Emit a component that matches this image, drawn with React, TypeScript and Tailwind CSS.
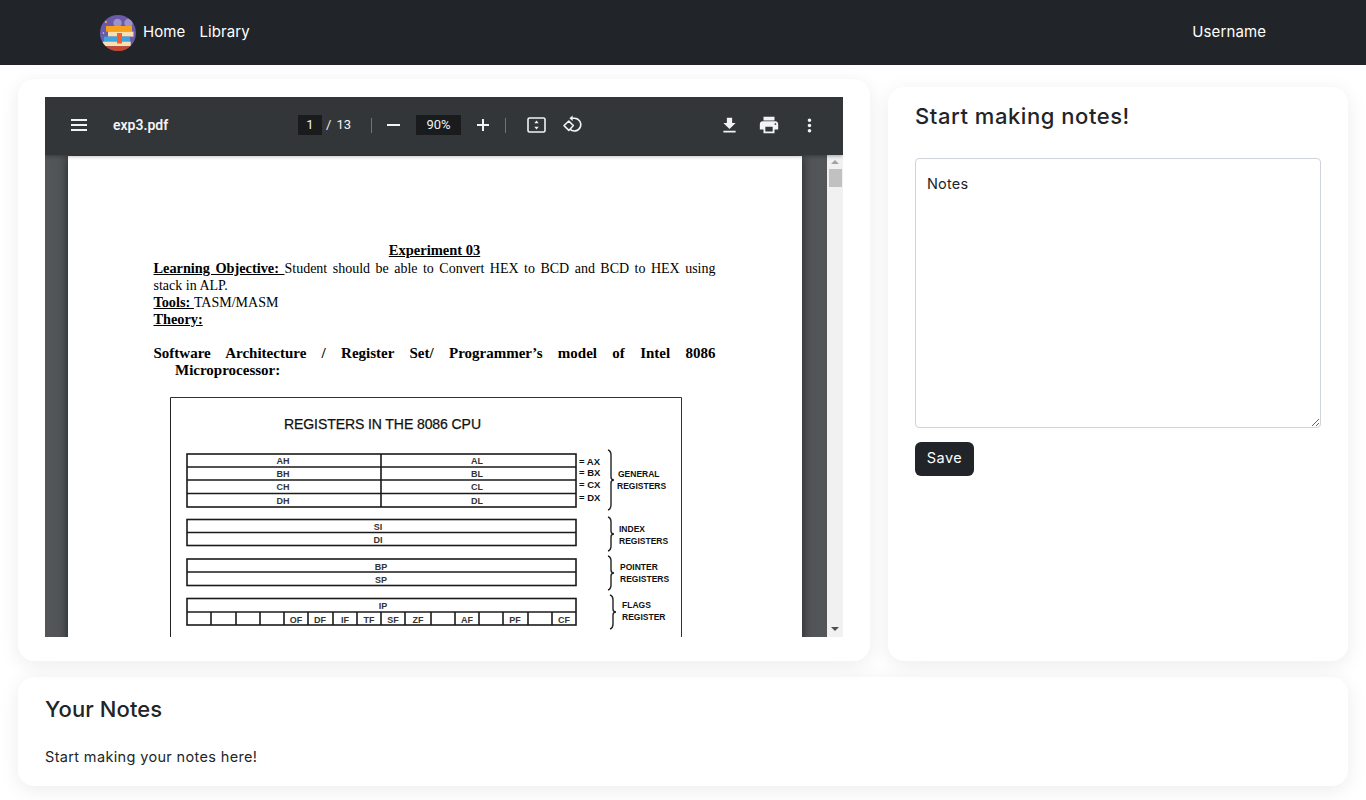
const Logo = () => (
  <svg width="36" height="36" viewBox="0 0 36 36" className="shrink-0">
    <defs>
      <clipPath id="logoClip"><circle cx="18" cy="18" r="18" /></clipPath>
    </defs>
    <g clipPath="url(#logoClip)">
      <rect width="36" height="36" fill="#6a5aa8" />
      <circle cx="17.5" cy="8" r="4.2" fill="#9c93c9" />
      <circle cx="28.5" cy="8" r="4.2" fill="#9c93c9" />
      <circle cx="6" cy="7" r="1" fill="#f6b84a" />
      <circle cx="3.5" cy="18" r="0.8" fill="#d9d4f0" />
      <rect x="6" y="11" width="26" height="5.6" fill="#f7a11b" />
      <rect x="8" y="16.6" width="25.5" height="5" fill="#f8deb0" />
      <rect x="4" y="21.6" width="26" height="5" fill="#3aa5e0" />
      <rect x="2.7" y="26.6" width="28" height="4.6" fill="#f8deb0" />
      <rect x="0" y="31.2" width="36" height="5" fill="#c9472b" />
      <rect x="17" y="18" width="5" height="10.5" fill="#f0602a" />
    </g>
  </svg>
);

const Tool = ({ d, size = 21 }: { d: string; size?: number }) => (
  <svg width={size} height={size} viewBox="0 0 24 24" fill="#f1f3f4" className="shrink-0">
    <path d={d} />
  </svg>
);

const Sep = () => <div className="w-px h-[15px] bg-[#6f7376] shrink-0" />;

const Toolbar = () => (
  <div className="relative z-10 h-[58px] pb-0.5 bg-[#323639] flex items-center text-[#f1f3f4] font-['Roboto',sans-serif] shadow-[0_1px_4px_rgba(0,0,0,0.35)]">
    <div className="w-[253px] shrink-0 flex items-center pl-[26px]">
      <svg width="16" height="12" viewBox="0 0 16 12" fill="#f1f3f4">
        <rect width="16" height="2" />
        <rect y="5" width="16" height="2" />
        <rect y="10" width="16" height="2" />
      </svg>
      <span className="ml-[26px] text-[14px] font-semibold">exp3.pdf</span>
    </div>
    <div className="w-6 h-5 bg-[#191b1c] text-[13px] flex items-center justify-center shrink-0">1</div>
    <div className="ml-1 w-[45px] text-[13px] shrink-0 flex">
      <span>/</span>
      <span className="ml-[5px]">13</span>
    </div>
    <Sep />
    <svg width="13" height="2" viewBox="0 0 13 2" fill="#f1f3f4" className="ml-[15px] shrink-0">
      <rect width="13" height="2" />
    </svg>
    <div className="ml-4 w-[45px] h-5 bg-[#191b1c] text-[13px] flex items-center justify-center shrink-0">90%</div>
    <svg width="12" height="12" viewBox="0 0 12 12" fill="#f1f3f4" className="ml-4 shrink-0">
      <rect y="5" width="12" height="2" />
      <rect x="5" width="2" height="12" />
    </svg>
    <div className="ml-4"><Sep /></div>
    <svg width="19" height="16" viewBox="0 0 19 16" fill="none" className="ml-[21px] shrink-0">
      <rect x="1" y="1" width="17" height="14" rx="1.5" stroke="#f1f3f4" strokeWidth="1.6" />
      <path d="M9.5 3.6l2.2 2.6H7.3zM9.5 12.4L7.3 9.8h4.4z" fill="#f1f3f4" />
    </svg>
    <svg width="20" height="20" viewBox="0 0 20 20" fill="none" className="ml-4 shrink-0">
      <path d="M10 3.2h2.5a6.4 6.4 0 1 1-4.6 11" stroke="#f1f3f4" strokeWidth="1.6" />
      <path d="M10.6 0.4v5.6L7.4 3.2z" fill="#f1f3f4" />
      <path d="M6.8 6L2 10.6l4.8 4.8 4.6-4.8z" stroke="#f1f3f4" strokeWidth="1.5" strokeLinejoin="round" />
    </svg>
    <div className="flex-1 flex items-center justify-end pr-[23.5px]">
      <Tool d="M19 9h-4V3H9v6H5l7 7 7-7zM5 18v2h14v-2H5z" />
      <div className="ml-[18.5px]">
        <Tool size={22} d="M19 8H5c-1.66 0-3 1.34-3 3v6h4v4h12v-4h4v-6c0-1.66-1.34-3-3-3zm-3 11H8v-5h8v5zm3-7c-.55 0-1-.45-1-1s.45-1 1-1 1 .45 1 1-.45 1-1 1zm-1-9H6v4h12V3z" />
      </div>
      <div className="ml-[18.5px]">
        <Tool d="M12 8c1.1 0 2-.9 2-2s-.9-2-2-2-2 .9-2 2 .9 2 2 2zm0 2c-1.1 0-2 .9-2 2s.9 2 2 2 2-.9 2-2-.9-2-2-2zm0 6c-1.1 0-2 .9-2 2s.9 2 2 2 2-.9 2-2-.9-2-2-2z" />
      </div>
    </div>
  </div>
);

const flagCuts = [211, 236, 260, 284, 308, 333, 357, 381, 405, 431, 455, 479, 503, 528, 552];
const flagLabels = [
  ['OF', 296], ['DF', 320], ['IF', 345], ['TF', 369], ['SF', 393], ['ZF', 418],
  ['AF', 467], ['PF', 515], ['CF', 564],
] as const;

const Brace = ({ x, y1, y2 }: { x: number; y1: number; y2: number }) => {
  const mid = (y1 + y2) / 2;
  return (
    <path
      d={`M${x - 2} ${y1}q3 1 3 5V${mid - 3}q0 3 3 3q-3 0 -3 3V${y2 - 5}q0 4 -3 5`}
      fill="none"
      stroke="#222"
      strokeWidth="1.4"
    />
  );
};

// register figure, coordinates are the ones of the rendered page
const RegisterFigure = () => (
  <svg width="525" height="250" viewBox="165 392 525 250" className="block ml-[97px] font-['Liberation_Sans',sans-serif]">
    <path d="M170.5 397.5H681.5V642" fill="none" stroke="#333" strokeWidth="1" />
    <path d="M170.5 397.5V642" fill="none" stroke="#222" strokeWidth="1" />
    <text x="284" y="429" fontSize="14" fill="#111" stroke="#111" strokeWidth="0.25" textLength="197">REGISTERS IN THE 8086 CPU</text>

    <g fill="none" stroke="#1a1a1a" strokeWidth="1.6">
      <rect x="187" y="454" width="389" height="53" />
      <path d="M187 467H576M187 480H576M187 493.5H576M381 454V507" />
      <rect x="187" y="519.5" width="389" height="26" />
      <path d="M187 532.5H576" />
      <rect x="187" y="559" width="389" height="26.5" />
      <path d="M187 572H576" />
      <rect x="187" y="598.5" width="389" height="26.5" />
      <path d="M187 612H576" />
      {flagCuts.map((x) => <path key={x} d={`M${x} 612V625`} />)}
    </g>

    <g fontSize="9" fill="#333" textAnchor="middle" fontWeight="700">
      <text x="283" y="464">AH</text>
      <text x="283" y="477">BH</text>
      <text x="283" y="490">CH</text>
      <text x="283" y="504">DH</text>
      <text x="477" y="464">AL</text>
      <text x="477" y="477">BL</text>
      <text x="477" y="490">CL</text>
      <text x="477" y="504">DL</text>
      <text x="378" y="530">SI</text>
      <text x="378" y="543">DI</text>
      <text x="381" y="570">BP</text>
      <text x="381" y="583">SP</text>
      <text x="383" y="609">IP</text>
      {flagLabels.map(([label, x]) => <text key={label} x={x} y="622.5">{label}</text>)}
    </g>

    <g fontSize="9.5" fill="#111" fontWeight="700">
      <text x="579" y="465">= AX</text>
      <text x="579" y="476">= BX</text>
      <text x="579" y="488">= CX</text>
      <text x="579" y="501">= DX</text>
    </g>
    <g fontSize="8.5" fill="#111" fontWeight="700">
      <text x="618" y="477">GENERAL</text>
      <text x="617" y="489">REGISTERS</text>
      <text x="619" y="532">INDEX</text>
      <text x="619" y="544">REGISTERS</text>
      <text x="620" y="570">POINTER</text>
      <text x="620" y="582">REGISTERS</text>
      <text x="622" y="608">FLAGS</text>
      <text x="622" y="620">REGISTER</text>
    </g>

    <Brace x={610} y1={450} y2={510} />
    <Brace x={610} y1={517} y2={551} />
    <Brace x={610} y1={556} y2={590} />
    <Brace x={612} y1={595} y2={629} />
  </svg>
);

const PdfPage = () => (
  <div className="ml-[23px] mt-px w-[734px] h-[600px] shrink-0 bg-white shadow-[0_0_10px_rgba(0,0,0,0.6)] pt-[87px] font-['Liberation_Serif',serif] text-black text-[14px] leading-[17px]">
    <div className="ml-[85.5px] w-[562px]">
      <div className="-mt-px mb-px text-center text-[14.5px] font-bold underline">Experiment 03</div>
      <div className="text-justify [text-align-last:justify]">
        <span className="text-[14.3px] font-bold underline">Learning Objective: </span>Student should be able to Convert HEX to BCD and BCD to HEX using
      </div>
      <div>stack in ALP.</div>
      <div><span className="text-[14.3px] font-bold underline">Tools: </span>TASM/MASM</div>
      <div className="text-[14.3px] font-bold underline">Theory:</div>
      <div className="mt-[17px] text-[15px] font-bold text-justify [text-align-last:justify]">
        Software Architecture / Register Set/ Programmer’s model of Intel 8086
      </div>
      <div className="pl-[21.5px] text-[15px] font-bold">Microprocessor:</div>
    </div>
    <div className="mt-[13px]"><RegisterFigure /></div>
  </div>
);

const Scrollbar = () => (
  <div className="w-4 shrink-0 bg-[#f1f1f1] flex flex-col items-center justify-between">
    <div className="flex flex-col items-center pt-[5px]">
      <div className="w-0 h-0 border-x-[4px] border-x-transparent border-b-[4px] border-b-[#a3a3a3]" />
      <div className="mt-[5px] w-[13px] h-[18px] bg-[#c1c1c1]" />
    </div>
    <div className="w-0 h-0 mb-[6px] border-x-[4px] border-x-transparent border-t-[4px] border-t-[#505050]" />
  </div>
);

export default function App() {
  return (
    <div className="min-h-[800px] bg-white text-[#212529] font-['Inter',sans-serif]">
      <nav className="h-[65px] bg-[#212529] flex items-center px-[100px] text-white text-[15px] tracking-[0.1px]">
        <Logo />
        <a className="ml-[7px] pb-px">Home</a>
        <a className="ml-[14px] pb-px">Library</a>
        <span className="ml-auto pb-px">Username</span>
      </nav>

      <div className="px-[18px] pt-[14px] flex items-end gap-[18px]">
        <div className="w-[852px] h-[582px] shrink-0 rounded-2xl bg-white shadow-[0_4px_20px_rgba(0,0,0,0.08)] pt-[18px] px-[27px]">
          <div className="h-[540px] flex flex-col overflow-hidden">
            <Toolbar />
            <div className="flex flex-1 min-h-0">
              <div className="flex-1 bg-[#525659] overflow-hidden"><PdfPage /></div>
              <Scrollbar />
            </div>
          </div>
        </div>

        <div className="flex-1 h-[574px] rounded-2xl bg-white shadow-[0_4px_20px_rgba(0,0,0,0.08)] px-[27px] pt-[15px]">
          <h2 className="text-[22px] tracking-[0.55px] leading-[28px] font-medium">Start making notes!</h2>
          <textarea
            defaultValue="Notes"
            className="mt-[28px] block w-full h-[270px] rounded border border-[#ced4da] px-[11px] py-[14px] text-[14.5px] tracking-[0.2px] leading-[22px] text-[#212529] outline-none"
          />
          <button className="mt-[14px] h-[34px] w-[59px] pb-0.5 rounded-md bg-[#212529] text-white text-[14.5px] tracking-[0.5px]">Save</button>
        </div>
      </div>

      <div className="mx-[18px] mt-4 h-[109px] rounded-2xl bg-white shadow-[0_4px_20px_rgba(0,0,0,0.08)] px-[27px] pt-[18px]">
        <h2 className="text-[22px] tracking-[0.1px] leading-[28px] font-medium">Your Notes</h2>
        <p className="mt-[23px] text-[14.5px] tracking-[0.35px] leading-[22px]">Start making your notes here!</p>
      </div>
    </div>
  );
}
